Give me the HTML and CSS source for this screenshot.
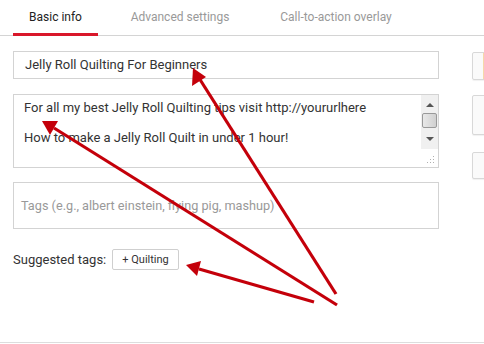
FILE: index.html
```html
<!DOCTYPE html>
<html lang="en">
<head>
	<meta charset="UTF-8">
	<title>Basic info</title>
	<link rel="stylesheet" href="styles.css">
</head>
<body>
	<div class="page">
		<!-- tabs -->
		<div class="tabs">
			<div class="tab tab_on">Basic info</div>
			<div class="tab tab2">Advanced settings</div>
			<div class="tab tab3">Call-to-action overlay</div>
		</div>

		<div class="main">
			<div class="form">
				<div class="field title_field">Jelly Roll Quilting For Beginners</div>

				<div class="field desc_field">
					<div class="desc_text">
						<p>For all my best Jelly Roll Quilting tips visit http://yoururlhere</p>
						<p>&nbsp;</p>
						<p>How to make a Jelly Roll Quilt in under 1 hour!</p>
					</div>
					<div class="scroll">
						<div class="sc_up"></div>
						<div class="sc_thumb"></div>
						<div class="sc_down"></div>
					</div>
					<svg class="grip" width="8" height="8" viewBox="0 0 8 8">
						<g fill="#b0b0b0">
							<rect x="6" y="0" width="1" height="1"></rect>
							<rect x="3" y="3" width="1" height="1"></rect>
							<rect x="6" y="3" width="1" height="1"></rect>
							<rect x="0" y="6" width="1" height="1"></rect>
							<rect x="3" y="6" width="1" height="1"></rect>
							<rect x="6" y="6" width="1" height="1"></rect>
						</g>
					</svg>
				</div>

				<div class="field tags_field">Tags (e.g., albert einstein, flying pig, mashup)</div>

				<div class="suggest">
					<span>Suggested tags:</span>
					<span class="tag_btn">+ Quilting</span>
				</div>
			</div>

			<!-- right side buttons, cut off -->
			<div class="side">
				<div class="side_box box1"></div>
				<div class="side_box box2"></div>
				<div class="side_box box3"></div>
			</div>
		</div>

		<div class="bottom_line"></div>

		<!-- red arrows drawn over the shot -->
		<svg class="arrows" width="484" height="344" viewBox="0 0 484 344">
			<g stroke="#c4000a" stroke-width="3.2" stroke-linecap="butt" fill="none">
				<line x1="336" y1="294" x2="199" y2="78"></line>
				<line x1="337" y1="305" x2="54" y2="128"></line>
				<line x1="314" y1="302" x2="199" y2="269"></line>
			</g>
			<g fill="#c4000a">
				<polygon points="193,68 192,86 206,77"></polygon>
				<polygon points="42,121 50,135 58,121"></polygon>
				<polygon points="186,265 197,276 201,261"></polygon>
			</g>
		</svg>
	</div>
</body>
</html>
```

FILE: styles.css
```css
* {
	margin: 0;
	padding: 0;
	box-sizing: border-box;
}

body {
	font-family: Roboto, "Liberation Sans", Arial, sans-serif;
	color: #333;
	background-color: #fff;
}

.page {
	width: 484px;
	height: 344px;
	position: relative;
	overflow: hidden;
}

.tabs {
	display: flex;
	height: 36px;
	padding-left: 13px;
	border-bottom: 1px solid #d4d4d4;
	font-size: 12px;
}

.tab {
	height: 35px;
	line-height: 34px;
	text-align: center;
	color: #999;
}

.tab_on {
	width: 85px;
	color: #222;
	border-bottom: 3px solid #d9172a;
	margin-bottom: -1px;
	height: 36px;
}

.tab2 {
	width: 164px;
}

.tab3 {
	width: 148px;
}

.main {
	display: flex;
	padding: 15px 0 0 13px;
}

.form {
	flex: none;
	width: 426px;
}

.field {
	border: 1px solid #d3d3d3;
	font-size: 13px;
}

.title_field {
	height: 28px;
	line-height: 26px;
	padding-left: 11px;
	color: #333;
}

.desc_field {
	height: 74px;
	margin-top: 15px;
	position: relative;
	display: flex;
	align-items: flex-start;
}

.desc_text {
	flex: 1;
	padding: 5px 0 0 10px;
	line-height: 15px;
}

.scroll {
	width: 17px;
	height: 54px;
	background-color: #f0f0f0;
	display: flex;
	flex-direction: column;
	align-items: center;
}

.sc_up, .sc_down {
	width: 0;
	height: 0;
	border-left: 4px solid transparent;
	border-right: 4px solid transparent;
}

.sc_up {
	border-bottom: 4px solid #555;
	margin-top: 8px;
}

.sc_thumb {
	width: 15px;
	height: 15px;
	margin-top: 6px;
	border: 1px solid #999;
	border-radius: 2px;
	background: linear-gradient(to right, #e8e8e8, #d0d0d0);
}

.sc_down {
	border-top: 4px solid #555;
	margin-top: 9px;
}

.grip {
	position: absolute;
	right: 3px;
	bottom: 3px;
}

.tags_field {
	height: 47px;
	margin-top: 14px;
	line-height: 45px;
	padding-left: 7px;
	font-size: 12.7px;
	color: #999;
}

.suggest {
	display: flex;
	align-items: center;
	margin-top: 20px;
	font-size: 13px;
	color: #333;
}

.tag_btn {
	margin-left: 6px;
	height: 21px;
	line-height: 19px;
	padding: 0 9px;
	border: 1px solid #cfcfcf;
	border-radius: 2px;
	font-size: 11px;
	color: #333;
}

.side {
	flex: none;
	margin-left: 33px;
	display: flex;
	flex-direction: column;
}

.side_box {
	width: 30px;
	border: 1px solid #d8d8d8;
	border-radius: 2px;
	box-shadow: 0 1px 1px rgba(0, 0, 0, 0.06);
	background-color: #fafafa;
}

.box1 {
	height: 28px;
	margin-top: 1px;
	background: linear-gradient(to right, #fafafa 10px, #f5d9a8 10px, #f5d9a8 12px, #fafafa 12px);
}

.box2 {
	height: 40px;
	margin-top: 15px;
}

.box3 {
	height: 27px;
	margin-top: 17px;
}

.bottom_line {
	position: absolute;
	left: 0;
	bottom: 1px;
	width: 484px;
	border-top: 1px solid #ddd;
}

.arrows {
	position: absolute;
	left: 0;
	top: 0;
}
```
